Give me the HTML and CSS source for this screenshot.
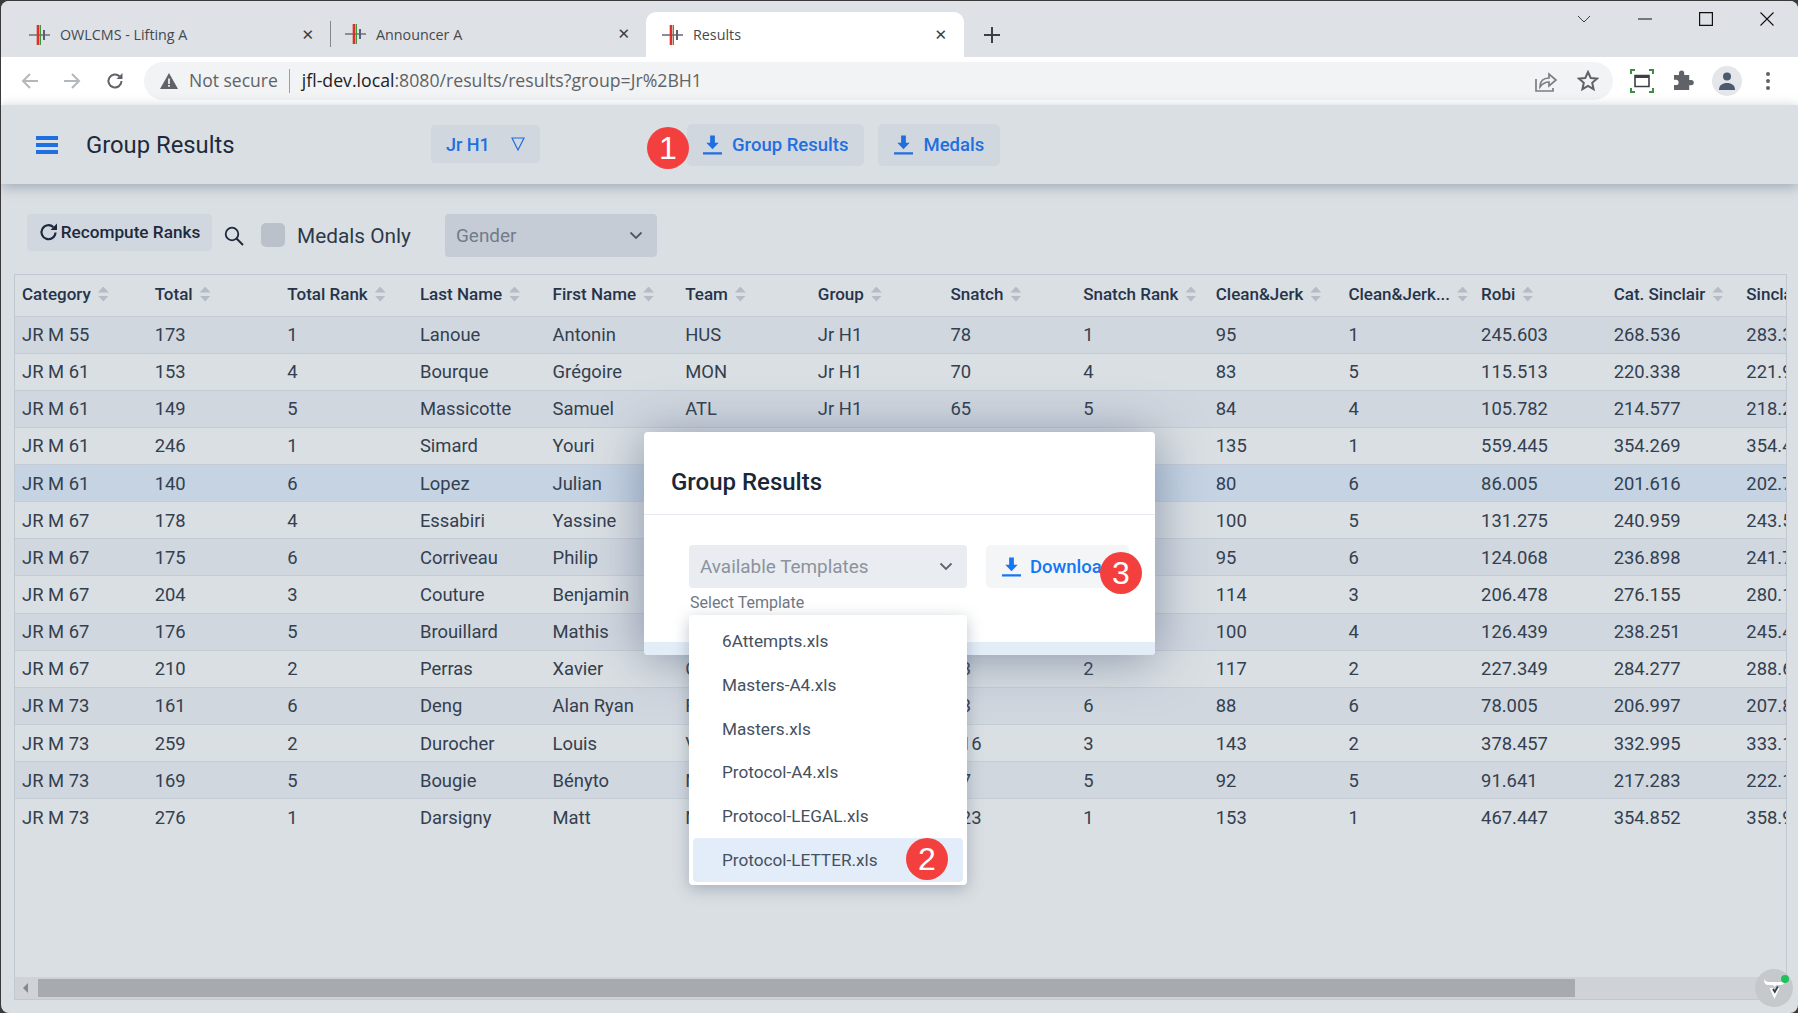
FILE: index.html

```html
<!DOCTYPE html>
<html lang="en">
<head>
  <meta charset="UTF-8" />
  <title>Results</title>
  <link rel="stylesheet" href="styles.css">
</head>
<body>
  <svg class="defs" width="0" height="0">
    <symbol id="favicon" viewBox="0 0 22 22">
      <path d="M0 11h21" stroke="#8a8d94" stroke-width="2" />
      <path d="M9 1v20" stroke="#e02d2d" stroke-width="2.6" />
      <path d="M11.4 1v20" stroke="#3a9a3a" stroke-width="1.2" />
      <path d="M15 6v10" stroke="#5a5f75" stroke-width="2" />
    </symbol>
    <symbol id="download" viewBox="0 0 20 20">
      <path d="M7.5 0h5v7.500h4L10 14.500 3.500 7.500h4z" fill="currentColor" />
      <path d="M0 17.500h20V20H0z" fill="currentColor" />
    </symbol>
    <symbol id="chevron" viewBox="0 0 14 9">
      <path d="M1.500 1.500 7 7l5.500-5.500" fill="none" stroke="currentColor" stroke-width="1.800" />
    </symbol>
  </svg>

  <div class="window">
    <div class="tabstrip">
      <div class="tab">
        <svg class="favicon"><use href="#favicon" /></svg>
        <span class="tab-title">OWLCMS - Lifting A</span>
        <span class="tab-close">&#x2715;</span>
      </div>
      <div class="tab tab-second">
        <svg class="favicon"><use href="#favicon" /></svg>
        <span class="tab-title">Announcer A</span>
        <span class="tab-close">&#x2715;</span>
      </div>
      <div class="tab tab-active">
        <svg class="favicon"><use href="#favicon" /></svg>
        <span class="tab-title">Results</span>
        <span class="tab-close">&#x2715;</span>
      </div>
      <svg class="new-tab" viewBox="0 0 16 16"><path d="M8 0v16M0 8h16" stroke="#3c4043" stroke-width="2" /></svg>
      <div class="window-controls">
        <svg class="win-btn" viewBox="0 0 14 8"><path d="M1 1l6 6 6-6" fill="none" stroke="#3c4043" /></svg>
        <svg class="win-btn" viewBox="0 0 14 14"><path d="M0 7h14" stroke="#111" stroke-width="1.200" /></svg>
        <svg class="win-btn" viewBox="0 0 14 14"><path d="M.6.6h12.800v12.800H.6z" fill="none" stroke="#111" stroke-width="1.200" /></svg>
        <svg class="win-btn" viewBox="0 0 14 14"><path d="M.5.500l13 13M13.500.500l-13 13" stroke="#111" stroke-width="1.100" /></svg>
      </div>
    </div>

    <div class="browser-bar">
      <svg class="nav-icon" viewBox="0 0 20 20"><path d="M18 10H3M10 3l-7 7 7 7" fill="none" stroke="#b4b7bb" stroke-width="2" /></svg>
      <svg class="nav-icon" viewBox="0 0 20 20"><path d="M2 10h15M10 3l7 7-7 7" fill="none" stroke="#b4b7bb" stroke-width="2" /></svg>
      <svg class="nav-icon" viewBox="0 0 20 20"><path d="M16.500 10a6.500 6.500 0 1 1-2-4.700" fill="none" stroke="#5f6368" stroke-width="2" /><path d="M17.500 2v6h-6z" fill="#5f6368" /></svg>
      <div class="omnibox">
        <svg class="warn" viewBox="0 0 18 16"><path d="M9 0l9 16H0z" fill="#5f6368" /><path d="M8.200 5.500h1.600v5.500H8.200zM8.200 12h1.600v1.800H8.200z" fill="#fff" /></svg>
        <span class="not-secure">Not secure</span>
        <span class="url"><b>jfl-dev.local</b>:8080/results/results?group=Jr%2BH1</span>
        <svg class="omni-icon share" viewBox="0 0 22 22"><path d="M1 9v12h17v-3" fill="none" stroke="#7b7e83" stroke-width="1.700" /><path d="M5 17c0-6 3-9 9-9V4l7 6-7 6v-4c-4 0-6 1-9 5z" fill="none" stroke="#7b7e83" stroke-width="1.700" /></svg>
        <svg class="omni-icon" viewBox="0 0 22 22"><path d="M11 2l2.700 6 6.300.6-4.800 4.200 1.400 6.400L11 15.900l-5.600 3.300 1.400-6.400L2 8.600 8.300 8z" fill="none" stroke="#5f6368" stroke-width="2" /></svg>
      </div>
      <svg class="bar-icon capture" viewBox="0 0 24 24">
        <path d="M1 5V1h4M19 1h4v4M23 19v4h-4M5 23H1v-4" fill="none" stroke="#3e8e41" stroke-width="2" />
        <path d="M5 6.500h14v11H5z" fill="none" stroke="#3c4043" stroke-width="1.600" /><path d="M5 6h14v3H5z" fill="#3c4043" />
      </svg>
      <svg class="bar-icon" viewBox="0 0 24 24"><path d="M3 8h5V6a2.600 2.600 0 0 1 5.200 0v2h5v5h2a2.600 2.600 0 0 1 0 5.200h-2V23H3v-5h2a2.600 2.600 0 0 0 0-5.200H3z" fill="#5f6368" transform="translate(0 -2)" /></svg>
      <div class="avatar">
        <svg viewBox="0 0 20 20"><circle cx="10" cy="5.500" r="4" fill="#4c5a70" /><path d="M2 19c0-5 3.500-7 8-7s8 2 8 7z" fill="#4c5a70" /></svg>
      </div>
      <div class="kebab"><i></i><i></i><i></i></div>
    </div>

    <header class="app-header">
      <svg class="hamburger" viewBox="0 0 22 18"><path d="M0 0h22v4H0zM0 7h22v4H0zM0 14h22v4H0z" fill="#1f6fe0" /></svg>
      <h1 class="app-title">Group Results</h1>
      <div class="group-picker">
        <span>Jr H1</span>
        <svg viewBox="0 0 14 14"><path d="M1 1h12L7 13z" fill="none" stroke="#1f6fe0" stroke-width="1.200" /></svg>
      </div>
      <button class="btn-download btn-first"><svg><use href="#download" /></svg>Group Results</button>
      <button class="btn-download"><svg><use href="#download" /></svg>Medals</button>
      <span class="badge badge-one">1</span>
    </header>

    <div class="filters">
      <button class="btn-recompute">
        <svg viewBox="0 0 20 20"><path d="M16.500 10.500a7 7 0 1 1-2.200-5.400" fill="none" stroke="#1d2a3d" stroke-width="2.200" /><path d="M18 1.500v6.500h-6.500z" fill="#1d2a3d" /></svg>
        Recompute Ranks
      </button>
      <svg class="search" viewBox="0 0 20 20"><circle cx="8" cy="8" r="6.300" fill="none" stroke="#1d2a3d" stroke-width="1.800" /><path d="M12.500 12.500 19 19" stroke="#1d2a3d" stroke-width="2" /></svg>
      <span class="checkbox"></span>
      <span class="check-label">Medals Only</span>
      <div class="select select-gender">
        <span>Gender</span>
        <svg><use href="#chevron" /></svg>
      </div>
    </div>

    <div class="grid">
      <div class="grid-body">
        <table>
          <thead>
            <tr>
              <th><span class="th-label">Category</span><i class="sorter"></i></th>
              <th><span class="th-label">Total</span><i class="sorter"></i></th>
              <th><span class="th-label">Total Rank</span><i class="sorter"></i></th>
              <th><span class="th-label">Last Name</span><i class="sorter"></i></th>
              <th><span class="th-label">First Name</span><i class="sorter"></i></th>
              <th><span class="th-label">Team</span><i class="sorter"></i></th>
              <th><span class="th-label">Group</span><i class="sorter"></i></th>
              <th><span class="th-label">Snatch</span><i class="sorter"></i></th>
              <th><span class="th-label">Snatch Rank</span><i class="sorter"></i></th>
              <th><span class="th-label">Clean&amp;Jerk</span><i class="sorter"></i></th>
              <th><span class="th-label">Clean&amp;Jerk...</span><i class="sorter"></i></th>
              <th><span class="th-label">Robi</span><i class="sorter"></i></th>
              <th><span class="th-label">Cat. Sinclair</span><i class="sorter"></i></th>
              <th><span class="th-label">Sinclair</span><i class="sorter"></i></th>
            </tr>
          </thead>
          <tbody>
            <tr><td>JR M 55</td><td>173</td><td>1</td><td>Lanoue</td><td>Antonin</td><td>HUS</td><td>Jr H1</td><td>78</td><td>1</td><td>95</td><td>1</td><td>245.603</td><td>268.536</td><td>283.312</td></tr>
            <tr><td>JR M 61</td><td>153</td><td>4</td><td>Bourque</td><td>Grégoire</td><td>MON</td><td>Jr H1</td><td>70</td><td>4</td><td>83</td><td>5</td><td>115.513</td><td>220.338</td><td>221.912</td></tr>
            <tr><td>JR M 61</td><td>149</td><td>5</td><td>Massicotte</td><td>Samuel</td><td>ATL</td><td>Jr H1</td><td>65</td><td>5</td><td>84</td><td>4</td><td>105.782</td><td>214.577</td><td>218.212</td></tr>
            <tr><td>JR M 61</td><td>246</td><td>1</td><td>Simard</td><td>Youri</td><td>ATL</td><td>Jr H1</td><td>111</td><td>1</td><td>135</td><td>1</td><td>559.445</td><td>354.269</td><td>354.412</td></tr>
            <tr class="row-selected"><td>JR M 61</td><td>140</td><td>6</td><td>Lopez</td><td>Julian</td><td>ATL</td><td>Jr H1</td><td>60</td><td>6</td><td>80</td><td>6</td><td>86.005</td><td>201.616</td><td>202.712</td></tr>
            <tr><td>JR M 67</td><td>178</td><td>4</td><td>Essabiri</td><td>Yassine</td><td>MON</td><td>Jr H1</td><td>78</td><td>4</td><td>100</td><td>5</td><td>131.275</td><td>240.959</td><td>243.512</td></tr>
            <tr><td>JR M 67</td><td>175</td><td>6</td><td>Corriveau</td><td>Philip</td><td>ATL</td><td>Jr H1</td><td>80</td><td>5</td><td>95</td><td>6</td><td>124.068</td><td>236.898</td><td>241.712</td></tr>
            <tr><td>JR M 67</td><td>204</td><td>3</td><td>Couture</td><td>Benjamin</td><td>MON</td><td>Jr H1</td><td>90</td><td>3</td><td>114</td><td>3</td><td>206.478</td><td>276.155</td><td>280.112</td></tr>
            <tr><td>JR M 67</td><td>176</td><td>5</td><td>Brouillard</td><td>Mathis</td><td>HUS</td><td>Jr H1</td><td>76</td><td>6</td><td>100</td><td>4</td><td>126.439</td><td>238.251</td><td>245.412</td></tr>
            <tr><td>JR M 67</td><td>210</td><td>2</td><td>Perras</td><td>Xavier</td><td>CAR</td><td>Jr H1</td><td>93</td><td>2</td><td>117</td><td>2</td><td>227.349</td><td>284.277</td><td>288.612</td></tr>
            <tr><td>JR M 73</td><td>161</td><td>6</td><td>Deng</td><td>Alan Ryan</td><td>FOR</td><td>Jr H1</td><td>73</td><td>6</td><td>88</td><td>6</td><td>78.005</td><td>206.997</td><td>207.812</td></tr>
            <tr><td>JR M 73</td><td>259</td><td>2</td><td>Durocher</td><td>Louis</td><td>VIC</td><td>Jr H1</td><td>116</td><td>3</td><td>143</td><td>2</td><td>378.457</td><td>332.995</td><td>333.112</td></tr>
            <tr><td>JR M 73</td><td>169</td><td>5</td><td>Bougie</td><td>Bényto</td><td>NOR</td><td>Jr H1</td><td>77</td><td>5</td><td>92</td><td>5</td><td>91.641</td><td>217.283</td><td>222.112</td></tr>
            <tr><td>JR M 73</td><td>276</td><td>1</td><td>Darsigny</td><td>Matt</td><td>NOR</td><td>Jr H1</td><td>123</td><td>1</td><td>153</td><td>1</td><td>467.447</td><td>354.852</td><td>358.912</td></tr>
          </tbody>
        </table>
      </div>
      <div class="hscroll">
        <span class="hscroll-arrow"></span>
        <span class="hscroll-thumb"></span>
      </div>
    </div>

    <div class="dialog">
      <h2 class="dialog-title">Group Results</h2>
      <div class="dialog-body">
        <div class="template-field">
          <div class="select select-template">
            <span>Available Templates</span>
            <svg><use href="#chevron" /></svg>
          </div>
          <div class="helper">Select Template</div>
        </div>
        <button class="btn-download btn-dialog"><svg><use href="#download" /></svg><span class="clip-label">Download</span></button>
      </div>
      <div class="dialog-foot"></div>
      <span class="badge badge-three">3</span>
    </div>

    <ul class="listbox">
      <li>6Attempts.xls</li>
      <li>Masters-A4.xls</li>
      <li>Masters.xls</li>
      <li>Protocol-A4.xls</li>
      <li>Protocol-LEGAL.xls</li>
      <li class="item-active">Protocol-LETTER.xls<span class="badge badge-two">2</span></li>
    </ul>

    <div class="dev-tools">
      <svg viewBox="0 0 21 20"><path d="M0 0c0 3 1 6 4 6h5l1.500 2L12 6h5c3 0 4-3 4-6-1 2-3 3-5 3H5C3 3 1 2 0 0z" fill="#fff" /><path d="M5.500 9h3.500l1.500 4L12 9h3.500l-5 11z" fill="#fff" /><path d="M9 10l1.800 3 3-5.500" fill="none" stroke="#33404f" stroke-width="1.800" /></svg>
      <i class="dev-dot"></i>
    </div>
  </div>
</body>
</html>
```

FILE: styles.css

```css
* {
  box-sizing: border-box;
}
html, body {
  margin: 0;
  height: 100%;
  overflow: hidden;
}
body {
  background-color: #3a3a3a;
  font-family: Roboto, sans-serif;
  color: #33404f;
}
.defs {
  position: absolute;
}
.window {
  position: relative;
  height: 1012px;
  width: 1797px;
  margin: 1px 0 0 1px;
  background-color: #dadfe3;
  border-radius: 8px;
  overflow: hidden;
  display: flex;
  flex-direction: column;
}

/* browser chrome */
.tabstrip {
  height: 56px;
  flex: none;
  background-color: #dee1e6;
  display: flex;
  padding-top: 11px;
}
.tab {
  width: 315px;
  height: 45px;
  margin-left: 14px;
  padding: 0 16px 0 14px;
  display: flex;
  align-items: center;
  font-family: "Open Sans", sans-serif;
  font-size: 14.300px;
  color: #45494f;
  border-radius: 10px 10px 0 0;
}
.tab-second {
  margin-left: 0;
  width: 316px;
  border-left: 1px solid #85888d;
  height: 26px;
  margin-top: 9px;
  border-radius: 0;
  padding-left: 14px;
}
.tab-active {
  margin-left: 0;
  width: 318px;
  background-color: #fff;
  padding-left: 16px;
  padding-right: 17px;
}
.favicon {
  width: 22px;
  height: 22px;
  flex: none;
  margin-right: 9px;
}
.tab-title {
  flex: 1;
  white-space: nowrap;
}
.tab-close {
  font-size: 15px;
  font-weight: 700;
  color: #3c4043;
  font-family: "DejaVu Sans", sans-serif;
}
.new-tab {
  width: 16px;
  height: 16px;
  margin: 15px 0 0 20px;
}
.window-controls {
  margin-left: auto;
  display: flex;
  height: 24px;
  margin-right: 24px;
  gap: 47px;
}
.win-btn {
  width: 14px;
  height: 14px;
}
.browser-bar {
  height: 48px;
  flex: none;
  background-color: #fff;
  display: flex;
  align-items: center;
  padding-left: 19px;
}
.nav-icon {
  width: 20px;
  height: 20px;
  margin-right: 22px;
  flex: none;
}
.nav-icon:nth-child(2) {
  margin-right: 23px;
}
.nav-icon:nth-child(3) {
  margin-right: 19px;
}
.omnibox {
  width: 1469px;
  height: 38px;
  border-radius: 19px;
  background-color: #f1f3f4;
  display: flex;
  align-items: center;
  padding-left: 16px;
  font-family: "Open Sans", sans-serif;
  font-size: 17.500px;
  flex: none;
}
.warn {
  width: 18px;
  height: 16px;
  margin-right: 11px;
}
.not-secure {
  color: #5f6368;
  padding-right: 11px;
  border-right: 1px solid #9aa0a6;
  line-height: 22px;
  padding-bottom: 2px;
  margin-right: 12px;
}
.url {
  color: #5f6368;
  flex: 1;
  font-size: 17.700px;
  line-height: 22px;
  padding-bottom: 2px;
  white-space: nowrap;
}
.url b {
  font-weight: 400;
  color: #202124;
}
.omni-icon {
  width: 22px;
  height: 22px;
  margin-right: 14px;
}
.omni-icon.share {
  margin-right: 20px;
}
.bar-icon {
  width: 24px;
  height: 24px;
  margin-left: 17px;
  flex: none;
}
.avatar {
  width: 30px;
  height: 30px;
  margin-left: 17px;
  border-radius: 50%;
  background-color: #e4e6ea;
  padding: 5px;
  flex: none;
}
.kebab {
  margin-left: 24px;
  display: flex;
  flex-direction: column;
  gap: 3px;
}
.kebab i {
  width: 4px;
  height: 4px;
  border-radius: 50%;
  background-color: #5f6368;
}

/* app header */
.app-header {
  position: relative;
  height: 79px;
  flex: none;
  display: flex;
  align-items: center;
  background-color: #dadfe3;
  box-shadow: 0 3px 12px rgba(90, 105, 130, 0.45);
  padding-left: 35px;
}
.hamburger {
  width: 22px;
  height: 18px;
  flex: none;
}
.app-title {
  margin: 0 0 0 28px;
  width: 345px;
  font-size: 23.800px;
  font-weight: 400;
  color: #1d2a3d;
}
.group-picker {
  width: 109px;
  height: 38px;
  background-color: #d1d7df;
  border-radius: 4px;
  color: #1f6fe0;
  font-size: 18px;
  font-weight: 500;
  display: flex;
  align-items: center;
  padding-left: 15px;
  margin-top: -1px;
}
.group-picker svg {
  width: 14px;
  height: 14px;
  margin-left: 21px;
}
.btn-download {
  height: 42px;
  border: none;
  border-radius: 5px;
  background-color: #d1d7df;
  color: #1f6fe0;
  font-family: Roboto, sans-serif;
  font-size: 18.500px;
  font-weight: 500;
  display: flex;
  align-items: center;
  padding: 0 16px;
  margin-left: 14px;
  margin-top: 0;
}
.btn-first {
  margin-left: 147px;
}
.btn-download svg {
  width: 19px;
  height: 20px;
  margin-right: 10px;
}
.badge {
  position: absolute;
  width: 42px;
  height: 42px;
  border-radius: 50%;
  background-color: #f43f3f;
  color: #fff;
  font-size: 32px;
  font-family: "Liberation Sans", sans-serif;
  line-height: 42px;
  text-align: center;
}
.badge-one {
  left: 646px;
  top: 22px;
}
.badge-two {
  right: 15px;
  top: 0;
}
.badge-three {
  left: 456px;
  top: 120px;
}

/* filters */
.filters {
  height: 90px;
  flex: none;
  display: flex;
  align-items: flex-start;
  padding: 30px 0 0 26px;
}
.btn-recompute {
  width: 185px;
  height: 37px;
  border: none;
  border-radius: 4px;
  background-color: #d1d7df;
  color: #1d2a3d;
  font-family: Roboto, sans-serif;
  font-size: 17.200px;
  font-weight: 500;
  display: flex;
  align-items: center;
  justify-content: center;
  padding: 0 0 2px;
  white-space: nowrap;
}
.btn-recompute svg {
  width: 20px;
  height: 20px;
  margin-right: 2px;
}
.search {
  width: 20px;
  height: 20px;
  margin: 12px 0 0 12px;
  flex: none;
}
.checkbox {
  width: 24px;
  height: 24px;
  border-radius: 5px;
  background-color: #bac1cb;
  margin: 9px 0 0 17px;
}
.check-label {
  margin: 9px 0 0 12px;
  font-size: 20.800px;
  line-height: 26px;
  color: #2c394b;
  width: 148px;
  white-space: nowrap;
}
.select {
  display: flex;
  align-items: center;
  justify-content: space-between;
  border-radius: 4px;
  height: 43px;
  padding: 0 14px 0 11px;
  font-size: 18.900px;
}
.select svg {
  width: 14px;
  height: 9px;
}
.select-gender {
  width: 212px;
  background-color: #c5ccd6;
  color: #727c89;
}
.select-gender svg {
  color: #4d5968;
}

/* grid */
.grid {
  flex: 1;
  min-height: 0;
  margin: 0 11px 13px 13px;
  border: 1px solid #c2c8d1;
  display: flex;
  flex-direction: column;
}
.grid-body {
  flex: 1;
  min-height: 0;
  overflow: hidden;
}
table {
  border-collapse: collapse;
  table-layout: fixed;
  width: 1857px;
}
th, td {
  padding: 0 0 0 7px;
  text-align: left;
  white-space: nowrap;
  overflow: hidden;
}
th {
  height: 41px;
  padding-bottom: 4px;
  font-size: 17px;
  font-weight: 500;
  color: #26344a;
}
.th-label {
  vertical-align: middle;
}
.sorter {
  display: inline-flex;
  flex-direction: column;
  gap: 3px;
  vertical-align: middle;
  margin-left: 7px;
}
.sorter::before, .sorter::after {
  content: "";
  width: 11px;
  height: 6px;
  background-color: #b5bcc6;
  clip-path: polygon(50% 0, 100% 100%, 0 100%);
}
.sorter::after {
  clip-path: polygon(0 0, 100% 0, 50% 100%);
}
td {
  height: 37.150px;
  font-size: 18.400px;
  color: #33404f;
  border-top: 1px solid #c5ccd6;
}
tbody tr:nth-child(odd) {
  background-color: #d1d7df;
}
tbody tr:nth-child(2n) {
  background-color: #dadfe3;
}
tbody tr.row-selected {
  background-color: #c5d3e3;
}
.hscroll {
  height: 22px;
  flex: none;
  background-color: #cfd3d7;
  display: flex;
  align-items: center;
}
.hscroll-arrow {
  width: 0;
  height: 0;
  margin-left: 8px;
  border-style: solid;
  border-width: 5px 5px 5px 0;
  border-color: transparent #85898d transparent transparent;
}
.hscroll-thumb {
  width: 1537px;
  height: 18px;
  margin-left: 10px;
  background-color: #a7abaf;
}

/* dialog */
.dialog {
  position: absolute;
  left: 643px;
  top: 431px;
  width: 511px;
  height: 223px;
  background-color: #fff;
  border-radius: 4px;
  box-shadow: 0 4px 50px rgba(70, 90, 120, 0.55);
  display: flex;
  flex-direction: column;
}
.dialog-title {
  margin: 0;
  height: 83px;
  flex: none;
  padding: 36px 0 0 27px;
  font-size: 24px;
  line-height: 28px;
  font-weight: 500;
  color: #1a2738;
  border-bottom: 1px solid #e6e9ee;
}
.dialog-body {
  flex: 1;
  display: flex;
  padding: 30px 0 0 45px;
}
.template-field {
  width: 278px;
}
.select-template {
  background-color: #e9ecf0;
  color: #8b939e;
}
.select-template svg {
  color: #5a6573;
}
.helper {
  margin: 5px 0 0 1px;
  font-size: 16px;
  line-height: 19px;
  color: #6f7884;
}
.btn-dialog {
  width: 143px;
  height: 43px;
  margin: 0 0 0 19px;
  background-color: #f3f5f7;
  color: #1676f3;
  padding: 0 0 0 16px;
  white-space: nowrap;
  overflow: hidden;
}
.btn-dialog svg {
  margin-right: 9px;
}
.clip-label {
  display: block;
}
.dialog-foot {
  height: 13px;
  flex: none;
  background-color: #e3edf8;
  border-radius: 0 0 4px 4px;
}
.listbox {
  position: absolute;
  left: 688px;
  top: 614px;
  width: 278px;
  height: 270px;
  margin: 0;
  padding: 4px;
  list-style: none;
  background-color: #fff;
  border-radius: 4px;
  box-shadow: 0 4px 16px rgba(70, 85, 110, 0.35);
  font-size: 17.200px;
  color: #46515f;
}
.listbox li {
  position: relative;
  height: 43.800px;
  line-height: 45px;
  padding-left: 29px;
  border-radius: 4px;
}
.listbox .item-active {
  background-color: #e3edf9;
}
.dev-tools {
  position: absolute;
  left: 1754px;
  top: 968px;
  width: 38px;
  height: 38px;
  border-radius: 50%;
  background-color: #c5c9cc;
  padding: 10px 9px;
}
.dev-tools svg {
  display: block;
  width: 21px;
  height: 20px;
}
.dev-dot {
  position: absolute;
  right: 4px;
  top: 6px;
  width: 8px;
  height: 8px;
  border-radius: 50%;
  background-color: #1ec15d;
}
```
